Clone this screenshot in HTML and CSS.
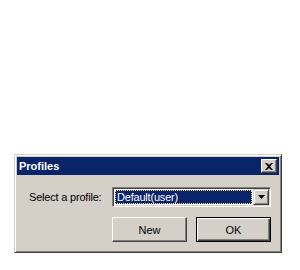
FILE: index.html
```html
<!DOCTYPE html>
<html lang="en">
<head>
  <meta charset="UTF-8" />
  <title>Profiles</title>
  <link rel="stylesheet" href="styles.css">
</head>
<body>
  <div class="dialog">
    <div class="titlebar">
      <span class="title">Profiles</span>
      <button class="close-btn" type="button">
        <svg width="8" height="7" viewBox="0 0 8 7"><path d="M0 0h2l2 2 2-2h2L5 3.5 8 7H6L4 5 2 7H0l3-3.5z" fill="#000"/></svg>
      </button>
    </div>
    <div class="dialog-body">
      <div class="row">
        <label class="field-label">Select a profile:</label>
        <div class="combo">
          <span class="combo-value">Default(user)</span>
          <span class="combo-arrow">
            <svg width="7" height="4" viewBox="0 0 7 4"><path d="M0 0h7L3.5 4z" fill="#000"/></svg>
          </span>
        </div>
      </div>
      <div class="buttons">
        <button class="btn" type="button">New</button>
        <button class="btn default" type="button">OK</button>
      </div>
    </div>
  </div>
</body>
</html>
```

FILE: styles.css
```css
body {
  margin: 0;
  background: #fff;
  font-family: 'Liberation Sans', Arial, sans-serif;
  font-size: 11px;
}
.dialog {
  box-sizing: border-box;
  width: 268px;
  height: 99px;
  margin: 154px 0 0 14px;
  padding: 2px;
  background: #d4d0c8;
  border: 1px solid;
  border-color: #d4d0c8 #404040 #404040 #d4d0c8;
  box-shadow: inset 1px 1px #fff, inset -1px -1px #808080;
}
.titlebar {
  height: 18px;
  background: #0a246a;
  display: flex;
  align-items: center;
  justify-content: space-between;
  padding: 0 2px 0 2px;
  margin-bottom: 1px;
}
.title {
  color: #fff;
  font-weight: bold;
  font-size: 11px;
}
.close-btn {
  box-sizing: border-box;
  width: 16px;
  height: 14px;
  padding: 0;
  background: #d4d0c8;
  border: 1px solid;
  border-color: #fff #404040 #404040 #fff;
  box-shadow: inset -1px -1px #808080;
  display: flex;
  align-items: center;
  justify-content: center;
}
.dialog-body {
  padding: 11px 0 0 0;
}
.row {
  display: flex;
  align-items: center;
}
.field-label {
  width: 83px;
  padding-left: 12px;
  color: #000;
  letter-spacing: -0.2px;
}
.combo {
  box-sizing: border-box;
  width: 159px;
  height: 20px;
  background: #fff;
  border: 1px solid;
  border-color: #808080 #fff #fff #808080;
  box-shadow: inset 1px 1px #404040, inset -1px -1px #d4d0c8;
  padding: 2px;
  display: flex;
  align-items: stretch;
}
.combo-value {
  flex: 1;
  background: #0a246a;
  color: #fff;
  border: 1px dotted #f5db95;
  padding-left: 1px;
  line-height: 12px;
  margin-right: 1px;
  letter-spacing: -0.2px;
}
.combo-arrow {
  box-sizing: border-box;
  width: 16px;
  margin: -1px -1px -1px 0;
  background: #d4d0c8;
  border: 1px solid;
  border-color: #d4d0c8 #404040 #404040 #d4d0c8;
  box-shadow: inset 1px 1px #fff, inset -1px -1px #808080;
  display: flex;
  align-items: center;
  justify-content: center;
}
.buttons {
  display: flex;
  gap: 9px;
  margin: 10px 0 0 95px;
}
.btn {
  box-sizing: border-box;
  width: 75px;
  height: 25px;
  padding: 0;
  font-family: 'Liberation Sans', Arial, sans-serif;
  font-size: 11px;
  color: #000;
  background: #d4d0c8;
  border: 1px solid;
  border-color: #fff #404040 #404040 #fff;
  box-shadow: inset -1px -1px #808080;
}
.btn.default {
  border: 1px solid #000;
  box-shadow: inset 1px 1px #fff, inset -1px -1px #404040, inset -2px -2px #808080;
}
```
